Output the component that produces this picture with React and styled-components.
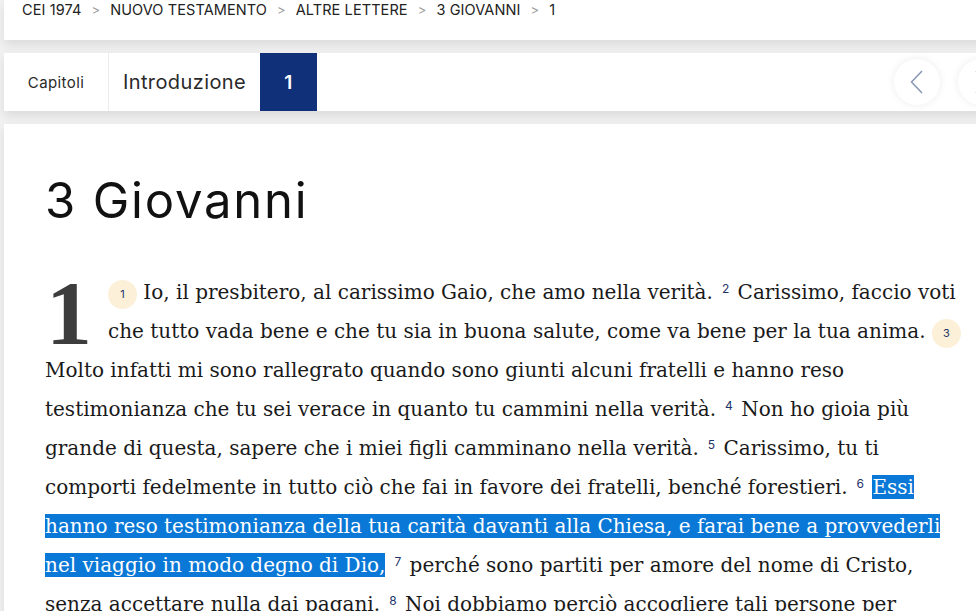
import React from 'react';
import styled, { createGlobalStyle } from 'styled-components';

const GlobalStyle = createGlobalStyle`
  html, body {
    margin: 0;
    padding: 0;
    background: #f1f1f1;
    overflow: hidden;
  }
`;

const Page = styled.div`
  width: 1010px;
  padding-left: 4px;
  display: flex;
  flex-direction: column;
  gap: 13px;
`;

const Panel = styled.div`
  background: #fff;
  box-shadow: 0 5px 10px rgba(0, 0, 0, 0.09);
`;

const Breadcrumb = styled(Panel)`
  height: 40px;
  display: flex;
  align-items: flex-start;
  padding-left: 18px;
  font-family: Inter, "Liberation Sans", sans-serif;
  font-size: 14.5px;
  letter-spacing: 0.1px;
  line-height: 20px;
  color: #222;
  text-transform: uppercase;
`;

const Crumb = styled.span`
  white-space: nowrap;
`;

const Sep = styled.span`
  color: #9a9a9a;
  margin: 0 10px;
  font-size: 13px;
`;

const TabBar = styled(Panel)`
  height: 58px;
  display: flex;
  align-items: stretch;
`;

const Tab = styled.div`
  display: flex;
  align-items: center;
  justify-content: center;
  width: ${p => p.$w}px;
  font-family: Inter, "Liberation Sans", sans-serif;
  font-size: ${p => p.$size}px;
  letter-spacing: 0.4px;
  color: ${p => (p.$active ? '#fff' : '#2a2a2a')};
  background: ${p => (p.$active ? '#10307a' : '#fff')};
  font-weight: ${p => (p.$active ? 600 : 400)};
  border-right: ${p => (p.$divider ? '1px solid #ececec' : 'none')};
`;

const NavGroup = styled.div`
  margin-left: auto;
  display: flex;
  align-items: center;
  gap: 18px;
  padding-right: 10px;
`;

const NavButton = styled.button`
  width: 46px;
  height: 46px;
  border-radius: 50%;
  border: none;
  background: #fff;
  box-shadow: 0 0 8px rgba(0, 0, 0, 0.08);
  display: flex;
  align-items: center;
  justify-content: center;
  padding: 0;
`;

const Content = styled(Panel)`
  padding: 47px 0 0 41px;
  min-height: 500px;
`;

const Title = styled.h1`
  margin: 0 0 42px;
  font-family: Inter, "Liberation Sans", sans-serif;
  font-weight: 400;
  font-size: 49px;
  line-height: 60px;
  color: #111;
  letter-spacing: 1.8px;
`;

const Text = styled.p`
  margin: 0;
  width: 918px;
  font-family: "DejaVu Serif", serif;
  font-size: 20px;
  line-height: 39px;
  color: #1a1a1a;
`;

const DropCap = styled.span`
  float: left;
  font-family: "Liberation Serif", serif;
  font-weight: 700;
  font-size: 92px;
  line-height: 76px;
  height: 76px;
  margin: 2px 16px 0 1px;
  color: #3d3d3d;
`;

const Badge = styled.span`
  display: inline-flex;
  align-items: center;
  justify-content: center;
  width: 29px;
  height: 29px;
  border-radius: 50%;
  background: #fcf0d8;
  color: #1d3468;
  font-family: Inter, "Liberation Sans", sans-serif;
  font-size: 11px;
  vertical-align: middle;
  margin: 2px 0 0 0;
`;

const Sup = styled.sup`
  font-family: Inter, "Liberation Sans", sans-serif;
  font-size: 12px;
  color: #1d3468;
  vertical-align: top;
  position: relative;
  top: -4px;
  margin: 0 2px 0 9px;
`;

const Selected = styled.span`
  background: #0a78d6;
  color: #fff;
`;

const ChevronLeft = () => (
  <svg width="14" height="24" viewBox="0 0 14 24" fill="none">
    <path d="M12 1 L1.5 12 L12 23" stroke="#8796b3" strokeWidth="1.5" />
  </svg>
);

const ChevronRight = () => (
  <svg width="14" height="24" viewBox="0 0 14 24" fill="none">
    <path d="M2 1 L12.5 12 L2 23" stroke="#8796b3" strokeWidth="1.5" />
  </svg>
);

const crumbs = ['CEI 1974', 'Nuovo Testamento', 'Altre lettere', '3 Giovanni', '1'];

export default function App() {
  return (
    <>
      <GlobalStyle />
      <Page>
        <Breadcrumb>
          {crumbs.map((c, i) => (
            <Crumb key={c}>
              {c}
              {i < crumbs.length - 1 && <Sep>&gt;</Sep>}
            </Crumb>
          ))}
        </Breadcrumb>

        <TabBar>
          <Tab $w={104} $size={15} $divider>Capitoli</Tab>
          <Tab $w={151} $size={20}>Introduzione</Tab>
          <Tab $w={57} $size={19} $active>1</Tab>
          <NavGroup>
            <NavButton><ChevronLeft /></NavButton>
            <NavButton><ChevronRight /></NavButton>
          </NavGroup>
        </TabBar>

        <Content>
          <Title>3 Giovanni</Title>
          <Text>
            <DropCap>1</DropCap>
            <Badge>1</Badge> Io, il presbitero, al carissimo Gaio, che amo nella verità.
            <Sup>2</Sup> Carissimo, faccio voti che tutto vada bene e che tu sia in buona salute, come va bene per la tua anima.{' '}
            <Badge>3</Badge> Molto infatti mi sono rallegrato quando sono giunti alcuni fratelli e hanno reso
            testimonianza che tu sei verace in quanto tu cammini nella verità.
            <Sup>4</Sup> Non ho gioia più grande di questa, sapere che i miei figli camminano nella verità.
            <Sup>5</Sup> Carissimo, tu ti comporti fedelmente in tutto ciò che fai in favore dei fratelli, benché forestieri.
            <Sup>6</Sup> <Selected>Essi hanno reso testimonianza della tua carità davanti alla Chiesa, e farai bene a provvederli nel viaggio in modo degno di Dio,</Selected>
            <Sup>7</Sup> perché sono partiti per amore del nome di Cristo, senza accettare nulla dai pagani.
            <Sup>8</Sup> Noi dobbiamo perciò accogliere tali persone per diventare cooperatori della verità.
          </Text>
        </Content>
      </Page>
    </>
  );
}
